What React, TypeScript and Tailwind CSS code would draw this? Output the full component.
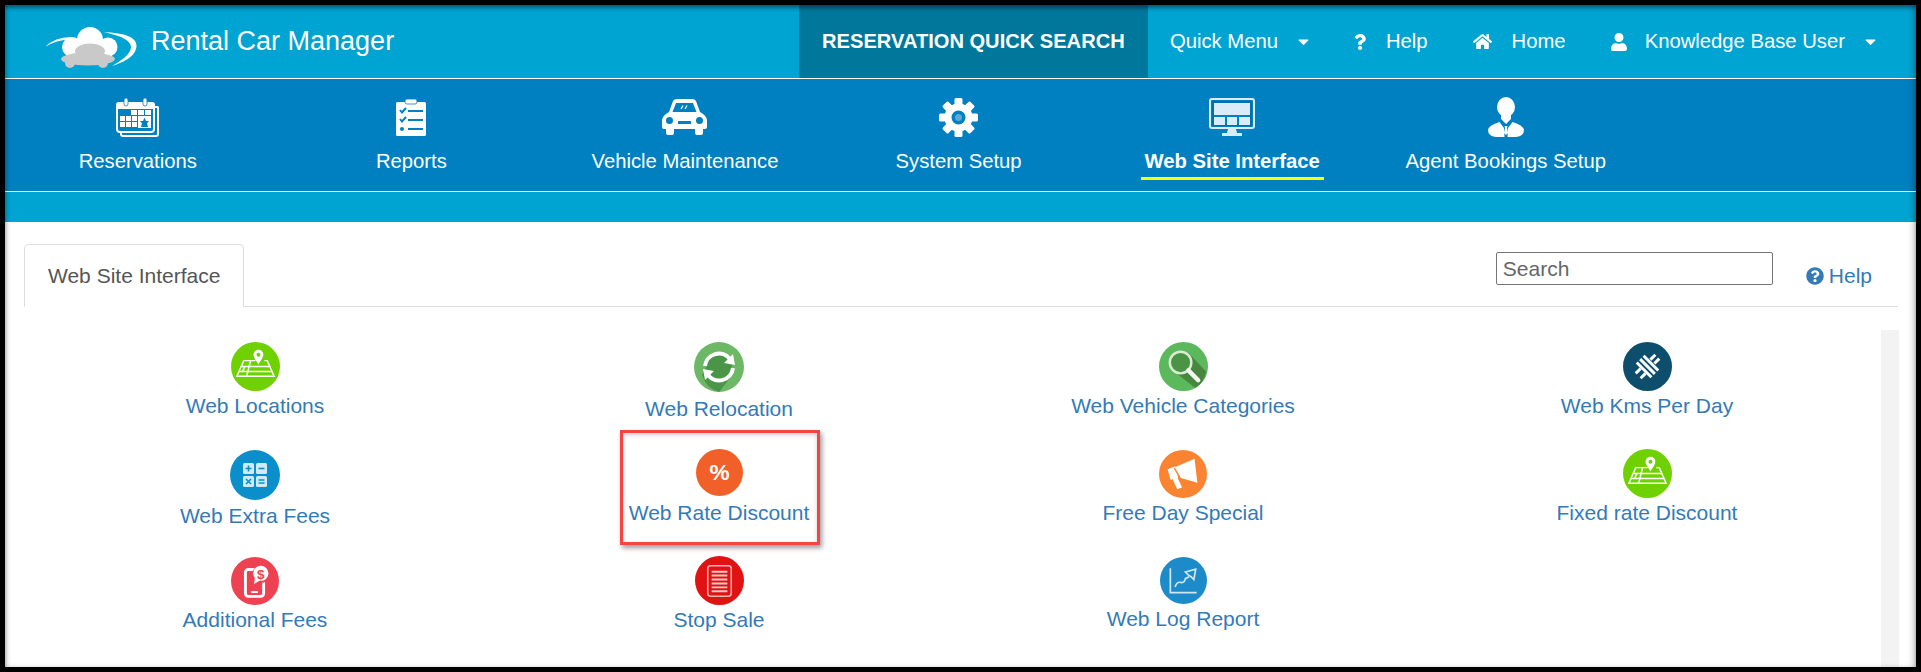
import { FaCaretDown, FaHome, FaQuestion, FaQuestionCircle, FaUser } from "react-icons/fa";
import type { ReactNode } from "react";

const font = { fontFamily: '"Liberation Sans", Arial, sans-serif' };

function Logo() {
  return (
    <svg width="93" height="41" viewBox="0 0 93 41" className="shrink-0 mt-[12px]">
      <path d="M1 20Q11 10 27 10L27 12Q12 13 1 20Z" fill="#fff" />
      <path d="M59 5C85 6 95 12 92 22C90 30 80 35 68 39C78 33 87 27 87 20C87 13 75 8 59 5Z" fill="#fff" />
      <circle cx="46" cy="13" r="13" fill="#fff" />
      <circle cx="28" cy="20" r="10" fill="#fff" />
      <circle cx="64" cy="20" r="9.5" fill="#fff" />
      <rect x="22" y="16" width="46" height="14" fill="#fff" />
      <ellipse cx="46" cy="24" rx="15" ry="7.5" fill="#c9c9c9" />
      <ellipse cx="44" cy="32" rx="27" ry="6.5" fill="#c9c9c9" />
      <circle cx="26" cy="36" r="5" fill="#c9c9c9" />
      <circle cx="59" cy="36" r="5" fill="#c9c9c9" />
    </svg>
  );
}

function CalendarIcon() {
  return (
    <svg width="43" height="40" viewBox="0 0 43 40">
      <path d="M39 9H41.5Q43 9 43 11V37Q43 40 40 40H7Q4 40 4 37V35H6V37Q6 38 7 38H40Q41 38 41 37V11H39Z" fill="#fff" />
      <rect x="1" y="6" width="37" height="29" rx="3" fill="none" stroke="#fff" strokeWidth="2" />
      <rect x="0" y="5" width="39" height="7" rx="3" fill="#fff" />
      <rect x="8" y="1" width="4" height="8" rx="2" fill="#fff" stroke="#0080c1" strokeWidth="0.8" />
      <rect x="27" y="1" width="4" height="8" rx="2" fill="#fff" stroke="#0080c1" strokeWidth="0.8" />
      <g fill="#fff">
        <rect x="15" y="13" width="6" height="5" />
        <rect x="22" y="13" width="6" height="5" />
        <rect x="29" y="13" width="6" height="5" />
        <rect x="4" y="19" width="5" height="5" />
        <rect x="10" y="19" width="5" height="5" />
        <rect x="16" y="19" width="5" height="5" />
        <rect x="22" y="19" width="13" height="12" />
        <rect x="4" y="25" width="5" height="5" />
        <rect x="10" y="25" width="5" height="5" />
        <rect x="16" y="25" width="5" height="5" />
      </g>
      <path d="M28.5 20.5L30 24H33L31 26.5L32 30H25L26 26.5L24 24H27Z" fill="#0080c1" />
    </svg>
  );
}

function ReportIcon() {
  return (
    <svg width="30" height="37" viewBox="0 0 30 37">
      <rect x="0" y="3" width="30" height="34" rx="1.5" fill="#fff" />
      <rect x="9" y="0" width="12" height="5" rx="2" fill="#fff" stroke="#0080c1" strokeWidth="0.8" />
      <g fill="none" stroke="#0080c1" strokeWidth="2">
        <path d="M4 11L6 13.5L10 9" />
        <path d="M12 12H27" />
        <path d="M4 20L6 22.5L10 18" />
        <path d="M12 21H27" />
        <path d="M12 30H27" />
      </g>
      <circle cx="6" cy="30" r="2" fill="#0080c1" />
    </svg>
  );
}

function CarIcon() {
  return (
    <svg width="45" height="36" viewBox="0 0 45 36">
      <path
        fillRule="evenodd"
        fill="#fff"
        d="M11 2Q12 0 15 0H30Q33 0 34 2L38 13Q44 16 45 21V28Q45 30 43 30H41V34Q41 36 39 36H35Q33 36 33 34V30H12V34Q12 36 10 36H6Q4 36 4 34V30H2Q0 30 0 28V21Q1 16 7 13ZM14 4L10.5 13H34.5L31 4ZM7.5 18A3.5 3.5 0 1 0 7.5 25A3.5 3.5 0 1 0 7.5 18ZM37.5 18A3.5 3.5 0 1 0 37.5 25A3.5 3.5 0 1 0 37.5 18ZM16 22V25H29V22Z"
      />
      <path d="M19 10L21 6.5M23 10L25 6.5" stroke="#fff" strokeWidth="1.2" />
    </svg>
  );
}

function GearIcon() {
  const angles = [0, 45, 90, 135, 180, 225, 270, 315];
  return (
    <svg width="39" height="39" viewBox="0 0 39 39">
      {angles.map((a) => (
        <rect key={a} x="15.5" y="0" width="8" height="8" rx="1.5" fill="#fff" transform={`rotate(${a} 19.5 19.5)`} />
      ))}
      <circle cx="19.5" cy="19.5" r="10.5" fill="none" stroke="#fff" strokeWidth="7" />
      <circle cx="19.5" cy="19.5" r="3.5" fill="#5ea8d6" />
    </svg>
  );
}

function MonitorIcon() {
  return (
    <svg width="46" height="38" viewBox="0 0 46 38">
      <rect x="1" y="1" width="44" height="29" rx="2" fill="none" stroke="#d9ecf7" strokeWidth="2" />
      <rect x="4" y="4" width="38" height="23" fill="none" stroke="#0a5f9a" strokeWidth="1" />
      <g fill="#d9ecf7">
        <rect x="5" y="5" width="36" height="12" />
        <rect x="5" y="19" width="11" height="8" />
        <rect x="18" y="19" width="10" height="8" />
        <rect x="30" y="19" width="11" height="8" />
        <path d="M19 31H27L28 35H33V38H13V35H18Z" />
      </g>
    </svg>
  );
}

function AgentIcon() {
  return (
    <svg width="36" height="40" viewBox="0 0 36 40">
      <ellipse cx="18" cy="10" rx="9" ry="10" fill="#fff" />
      <path d="M13 16V22L18 27L23 22V16Z" fill="#fff" />
      <path d="M11.5 25L16 31L16.5 40H8Q0 39 0 33Q1 28 11.5 25ZM24.5 25L20 31L19.5 40H28Q36 39 36 33Q35 28 24.5 25Z" fill="#fff" />
      <path d="M16.5 29H19.5L19 31L20 36L18 38L16 36L17 31Z" fill="#fff" />
    </svg>
  );
}

function MapIcon() {
  return (
    <svg viewBox="0 0 50 50" className="w-full h-full">
      <circle cx="25" cy="25" r="25" fill="#6fd200" />
      <g fill="none" stroke="#fff" strokeWidth="1.5">
        <path d="M15 19H25M34 19H37L44 35H6L13 19H15" />
        <path d="M10 25H40M8 30H42" />
        <path d="M20 19L16 35M14 25L12 30" />
      </g>
      <path d="M28 8A4.8 4.8 0 0 1 33 13C33 16 30 19 28 23C26 19 23 16 23 13A4.8 4.8 0 0 1 28 8Z" fill="#fff" />
      <circle cx="28" cy="13" r="2" fill="#6fd200" />
    </svg>
  );
}

function CalcIcon() {
  return (
    <svg viewBox="0 0 50 50" className="w-full h-full">
      <circle cx="25" cy="25" r="25" fill="#0b8fca" />
      <g fill="#cfe9f5">
        <rect x="13" y="13" width="11" height="11" rx="1.5" />
        <rect x="26" y="13" width="11" height="11" rx="1.5" />
        <rect x="13" y="26" width="11" height="11" rx="1.5" />
        <rect x="26" y="26" width="11" height="11" rx="1.5" />
      </g>
      <g stroke="#0b8fca" strokeWidth="1.6">
        <path d="M15.5 18.5H21.5M18.5 15.5V21.5" />
        <path d="M28.5 18.5H34.5" />
        <path d="M16 29L21 34M21 29L16 34" />
        <path d="M28.5 30H34.5M28.5 33H34.5" />
      </g>
    </svg>
  );
}

function PhoneIcon() {
  return (
    <svg viewBox="0 0 50 50" className="w-full h-full">
      <circle cx="25" cy="25" r="25" fill="#ee4152" />
      <rect x="15" y="13" width="19" height="28" rx="3" fill="none" stroke="#fff" strokeWidth="3" />
      <path d="M21 36.5H28" stroke="#fff" strokeWidth="2" />
      <circle cx="31" cy="18" r="9" fill="#ee4152" />
      <circle cx="31" cy="17" r="8" fill="#fff" />
      <path d="M25 21L24 28L31 24Z" fill="#fff" />
      <text x="31" y="22.5" textAnchor="middle" fontSize="14" fontWeight="bold" fill="#ee4152" style={font}>$</text>
    </svg>
  );
}

function RelocationIcon() {
  return (
    <svg viewBox="0 0 50 50" className="w-full h-full">
      <circle cx="25" cy="25" r="25" fill="#6cb865" />
      <path d="M8 33L17 15L36 36L25 50A25 25 0 0 1 8 33Z" fill="#4b9549" />
      <circle cx="25" cy="25" r="13" fill="#4b9549" />
      <g fill="none" stroke="#fff" strokeWidth="4">
        <path d="M11 24A14 14 0 0 1 36 17" />
        <path d="M39 26A14 14 0 0 1 14 33" />
      </g>
      <path d="M39 12L41 23L30 21Z" fill="#fff" />
      <path d="M11 38L9 27L20 29Z" fill="#fff" />
    </svg>
  );
}

function PercentIcon() {
  return (
    <svg viewBox="0 0 50 50" className="w-full h-full">
      <circle cx="25" cy="25" r="25" fill="#f2602a" />
      <text x="25" y="33" textAnchor="middle" fontSize="24" fontWeight="bold" fill="#fff" style={font}>%</text>
    </svg>
  );
}

function SheetIcon() {
  return (
    <svg viewBox="0 0 50 50" className="w-full h-full">
      <circle cx="25" cy="25" r="25" fill="#e01212" />
      <rect x="13" y="10" width="24" height="31" rx="3" fill="none" stroke="#f5b5b5" strokeWidth="1.6" />
      <g stroke="#f8c8c8" strokeWidth="2">
        <path d="M17 16H33M17 20H33M17 24H33M17 28H33M17 32H33M17 36H33" />
      </g>
    </svg>
  );
}

function SearchIcon() {
  return (
    <svg viewBox="0 0 50 50" className="w-full h-full">
      <circle cx="25" cy="25" r="25" fill="#5cb85c" />
      <path d="M13 28L30 11L48 30A25 25 0 0 1 37 47Z" fill="#47873f" />
      <circle cx="22" cy="21" r="11" fill="#4b9446" stroke="#d8ecd2" strokeWidth="2.5" />
      <path d="M30 29L40 39" stroke="#f4f8f2" strokeWidth="4.5" strokeLinecap="round" />
    </svg>
  );
}

function MegaphoneIcon() {
  return (
    <svg viewBox="0 0 50 50" className="w-full h-full">
      <circle cx="25" cy="25" r="25" fill="#fa8431" />
      <path d="M37 9L40 34L22 29L14 19Z" fill="#fff" />
      <path d="M9 20L17 17L20 29L12 31Z" fill="#fff" />
      <path d="M14 30L19 28L24 39L19 41Z" fill="#fff" />
      <path d="M16 19L22 29" stroke="#fa8431" strokeWidth="1.5" />
    </svg>
  );
}

function KmsIcon() {
  return (
    <svg viewBox="0 0 50 50" className="w-full h-full">
      <circle cx="25" cy="25" r="25" fill="#0c4e6c" />
      <g stroke="#fff" strokeWidth="3">
        <path d="M21 14L36 29M17.5 17.5L32.5 32.5M14 21L29 36" />
        <path d="M28 18L33 13M32 22L37 17M13 32L18 27M18 37L23 32" />
      </g>
    </svg>
  );
}

function ChartIcon() {
  return (
    <svg viewBox="0 0 50 50" className="w-full h-full">
      <circle cx="25" cy="25" r="25" fill="#1d8bca" />
      <path d="M11 12V38H39" fill="none" stroke="#cfe6f4" strokeWidth="1.8" />
      <path d="M16 32Q18 26 22 27Q26 28 27 23L31 21" fill="none" stroke="#cfe6f4" strokeWidth="1.8" />
      <path d="M27 16L38 13L36 24L33 21L30 19Z" fill="none" stroke="#cfe6f4" strokeWidth="1.8" />
    </svg>
  );
}

type Shortcut = {
  label: string;
  icon: ReactNode;
  size: string;
  top: string;
  gap: string;
  selected?: boolean;
};

const shortcuts: Shortcut[] = [
  { label: "Web Locations", icon: <MapIcon />, size: "w-[49px] h-[49px]", top: "pt-0", gap: "mt-[3px]" },
  { label: "Web Relocation", icon: <RelocationIcon />, size: "w-[50px] h-[50px]", top: "pt-0", gap: "mt-[5px]" },
  { label: "Web Vehicle Categories", icon: <SearchIcon />, size: "w-[49px] h-[49px]", top: "pt-0", gap: "mt-[3px]" },
  { label: "Web Kms Per Day", icon: <KmsIcon />, size: "w-[49px] h-[49px]", top: "pt-0", gap: "mt-[3px]" },
  { label: "Web Extra Fees", icon: <CalcIcon />, size: "w-[50px] h-[50px]", top: "pt-px", gap: "mt-[4px]" },
  { label: "Web Rate Discount", icon: <PercentIcon />, size: "w-[47px] h-[47px]", top: "pt-0", gap: "mt-[5px]", selected: true },
  { label: "Free Day Special", icon: <MegaphoneIcon />, size: "w-[48px] h-[48px]", top: "pt-px", gap: "mt-[3px]" },
  { label: "Fixed rate Discount", icon: <MapIcon />, size: "w-[49px] h-[49px]", top: "pt-0", gap: "mt-[3px]" },
  { label: "Additional Fees", icon: <PhoneIcon />, size: "w-[48px] h-[48px]", top: "pt-px", gap: "mt-[3px]" },
  { label: "Stop Sale", icon: <SheetIcon />, size: "w-[49px] h-[49px]", top: "pt-0", gap: "mt-[3px]" },
  { label: "Web Log Report", icon: <ChartIcon />, size: "w-[47px] h-[47px]", top: "pt-px", gap: "mt-[3px]" },
];

const navItems = [
  { label: "Reservations", icon: <CalendarIcon /> },
  { label: "Reports", icon: <ReportIcon /> },
  { label: "Vehicle Maintenance", icon: <CarIcon /> },
  { label: "System Setup", icon: <GearIcon /> },
  { label: "Web Site Interface", icon: <MonitorIcon />, active: true },
  { label: "Agent Bookings Setup", icon: <AgentIcon /> },
];

export default function App() {
  return (
    <div className="relative h-[672px] w-full border-[5px] border-black bg-white flex flex-col overflow-hidden" style={font}>
      {/* top bar */}
      <div className="h-[73px] bg-[#00a4d3] flex items-center text-white text-[20.25px] pl-[39px] pr-[37px]">
        <Logo />
        <div className="ml-[14px] text-[27px] leading-none">Rental Car Manager</div>
        <div className="ml-auto self-stretch w-[349px] bg-[#00779b] flex items-center justify-center font-bold text-[20.1px]">
          RESERVATION QUICK SEARCH
        </div>
        <div className="ml-[22px]">Quick Menu</div>
        <FaCaretDown className="ml-[17px] text-[17px]" />
        <FaQuestion className="ml-[40px] text-[16px]" />
        <div className="ml-[18px]">Help</div>
        <FaHome className="ml-[45px] text-[19px]" />
        <div className="ml-[20px]">Home</div>
        <FaUser className="ml-[44px] text-[18px]" />
        <div className="ml-[17px]">Knowledge Base User</div>
        <FaCaretDown className="ml-[17px] text-[17px]" />
      </div>

      {/* main nav */}
      <div className="h-[114px] bg-[#0080c1] border-y border-white flex">
        <div className="flex -ml-1 pt-[16px]">
          {navItems.map((item) => (
            <div key={item.label} className="w-[273.6px] flex flex-col items-center text-white text-[20.25px]">
              <div className="h-[44px] flex items-center">{item.icon}</div>
              <div
                className={
                  item.active
                    ? "mt-[10px] leading-6 px-1 pb-1 border-b-[3px] border-[#ffff00] font-bold"
                    : "mt-[10px] leading-6 px-1 pb-1 border-b-[3px] border-transparent"
                }
              >
                {item.label}
              </div>
            </div>
          ))}
        </div>
      </div>
      <div className="h-[30px] bg-[#00a4d3]" />

      {/* tab bar */}
      <div className="mt-[22px] ml-[19px] mr-[18px] h-[63px] border-b border-[#ddd] flex">
        <div className="w-[220px] h-[63px] px-[23px] border border-b-0 border-[#ddd] rounded-t-[5px] bg-white flex items-center whitespace-nowrap text-[21px] text-[#555]">
          Web Site Interface
        </div>
        <input
          placeholder="Search"
          className="ml-auto mt-[8px] w-[277px] h-[33px] px-[6px] border border-[#767676] rounded-[2px] text-[21px] placeholder:text-[#666]"
        />
        <div className="ml-[33px] mr-[26px] mt-[20px] h-6 flex items-center gap-[5px] text-[21px] text-[#337ab7]">
          <FaQuestionCircle className="text-[18px]" />
          Help
        </div>
      </div>

      {/* shortcut grid */}
      <div className="flex-1 flex">
        <div className="flex-1 pl-[18px] pt-[35px]">
          <div className="grid grid-cols-[repeat(4,464px)] auto-rows-[107px]">
            {shortcuts.map((s) => (
              <div key={s.label} className={`relative flex flex-col items-center ${s.top}`}>
                {s.selected && (
                  <div className="absolute top-[-19px] left-[133px] w-[200px] h-[115px] border-[3px] border-[#f44444] shadow-[2px_3px_5px_rgba(0,0,0,0.4),inset_0_2px_4px_rgba(0,0,0,0.2)]" />
                )}
                <div className={s.size}>{s.icon}</div>
                <div className={`${s.gap} text-[21px] leading-6 text-[#337ab7]`}>{s.label}</div>
              </div>
            ))}
          </div>
        </div>
        <div className="w-[18px] mr-[17px] mt-[23px] bg-[#f3f3f3]" />
      </div>

      {/* inner shadow of the screenshot frame */}
      <div className="absolute inset-0 pointer-events-none shadow-[inset_0_4px_4px_-1px_rgba(0,0,0,0.4),inset_4px_0_5px_-2px_rgba(0,0,0,0.2),inset_-5px_0_6px_-2px_rgba(0,0,0,0.2)]" />
    </div>
  );
}
